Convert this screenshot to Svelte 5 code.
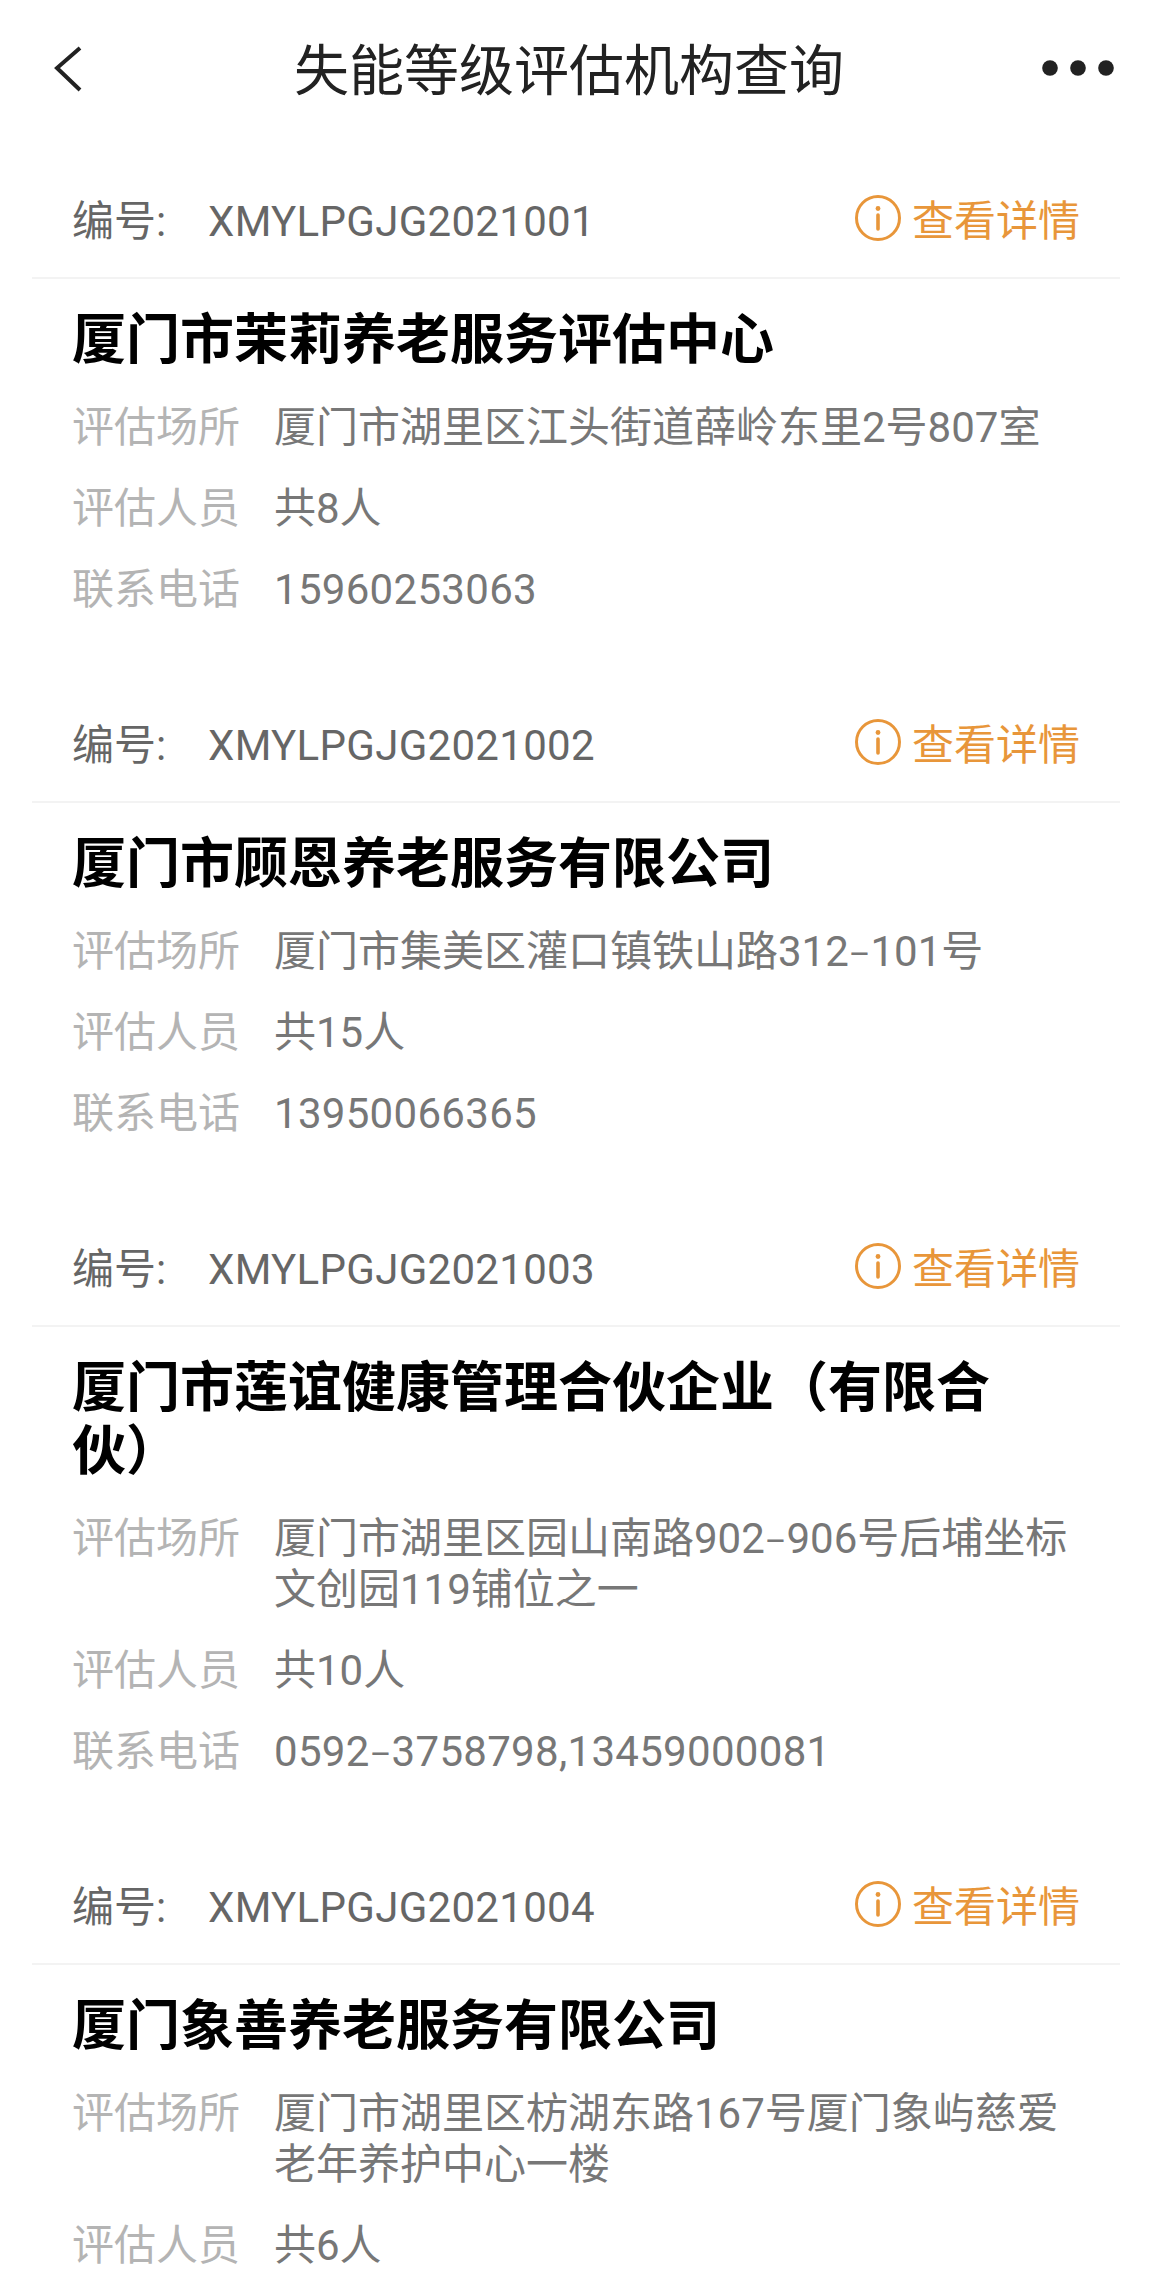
<script>
  const orgs = [
    {
      no: "XMYLPGJG2021001",
      name: "厦门市茉莉养老服务评估中心",
      place: "厦门市湖里区江头街道薛岭东里2号807室",
      staff: "共8人",
      tel: "15960253063"
    },
    {
      no: "XMYLPGJG2021002",
      name: "厦门市顾恩养老服务有限公司",
      place: "厦门市集美区灌口镇铁山路312–101号",
      staff: "共15人",
      tel: "13950066365"
    },
    {
      no: "XMYLPGJG2021003",
      name: "厦门市莲谊健康管理合伙企业（有限合伙）",
      place: "厦门市湖里区园山南路902–906号后埔坐标文创园119铺位之一",
      staff: "共10人",
      tel: "0592–3758798,13459000081"
    },
    {
      no: "XMYLPGJG2021004",
      name: "厦门象善养老服务有限公司",
      place: "厦门市湖里区枋湖东路167号厦门象屿慈爱老年养护中心一楼",
      staff: "共6人",
      tel: ""
    }
  ];

  // the dash in the screenshot is narrower than the font's, so it gets its own span
  const parts = s => s.split("–");
</script>

<div class="page">
  <header class="nav">
    <svg class="back" width="32" height="50" viewBox="0 0 32 50">
      <path d="M30 5 L7 25 L30 47" fill="none" stroke="#222" stroke-width="4" />
    </svg>
    <div class="nav-title">失能等级评估机构查询</div>
    <svg class="more" width="72" height="16" viewBox="0 0 72 16">
      <circle cx="8" cy="8" r="7.8" fill="#222" />
      <circle cx="36" cy="8" r="7.8" fill="#222" />
      <circle cx="64" cy="8" r="7.8" fill="#222" />
    </svg>
  </header>

  {#each orgs as org}
    <section class="card">
      <div class="head">
        <div class="no"><span class="no-label">编号:</span>{org.no}</div>
        <div class="detail">
          <svg width="46" height="46" viewBox="0 0 46 46">
            <circle cx="23" cy="23" r="21.5" fill="none" stroke="#e8963a" stroke-width="3" />
            <circle cx="23" cy="13.5" r="2.4" fill="#e8963a" />
            <path d="M23 20 V34" stroke="#e8963a" stroke-width="3.6" stroke-linecap="round" />
          </svg>
          <span>查看详情</span>
        </div>
      </div>
      <div class="body">
        <h2>{org.name}</h2>
        <div class="row">
          <div class="label">评估场所</div>
          <div class="value">{#each parts(org.place) as part, i}{#if i}<span class="dash">–</span>{/if}{part}{/each}</div>
        </div>
        <div class="row"><div class="label">评估人员</div><div class="value">{org.staff}</div></div>
        {#if org.tel}
          <div class="row">
            <div class="label">联系电话</div>
            <div class="value tel">{#each parts(org.tel) as part, i}{#if i}<span class="dash">–</span>{/if}{part}{/each}</div>
          </div>
        {/if}
      </div>
    </section>
  {/each}
</div>

<style>
  :global(body) {
    background: #fff;
  }

  .page {
    height: 2270px;
    overflow: hidden;
    font-family: Roboto, "Noto Sans CJK SC", sans-serif;
    background: #fff;
  }

  .nav {
    height: 136px;
    display: flex;
    align-items: center;
    justify-content: space-between;
    padding: 0 38px 0 50px;
    position: relative;
  }

  .nav-title {
    position: absolute;
    left: 0;
    right: 14px;
    margin-top: -5px;
    text-align: center;
    font-size: 55px;
    color: #222;
  }

  .card {
    padding-bottom: 30px;
  }

  .head {
    height: 143px;
    margin: 0 32px;
    box-sizing: border-box;
    padding: 22px 40px 0 40px;
    border-bottom: 2px solid #f3f3f3;
    display: flex;
    align-items: center;
    justify-content: space-between;
  }

  .no {
    font-size: 42px;
    letter-spacing: 0.3px;
    color: #666;
  }

  .no-label {
    display: inline-block;
    width: 136px;
    letter-spacing: 0;
  }

  .detail {
    display: flex;
    align-items: center;
    gap: 11px;
    font-size: 42px;
    color: #e8963a;
  }

  .body {
    padding: 0 56px 0 72px;
  }

  h2 {
    margin: 0 30px 0 0;
    padding: 30px 0 15px;
    font-size: 54px;
    line-height: 63px;
    font-weight: 700;
    color: #000;
  }

  .row {
    display: flex;
    font-size: 42px;
    line-height: 51px;
    padding: 15px 0;
  }

  .label {
    flex: 0 0 202px;
    color: #b4b4b4;
  }

  .value {
    flex: 1;
    color: #777;
  }

  .tel {
    letter-spacing: 0.3px;
  }

  .dash {
    font-size: 33px;
    line-height: 0;
  }
</style>
